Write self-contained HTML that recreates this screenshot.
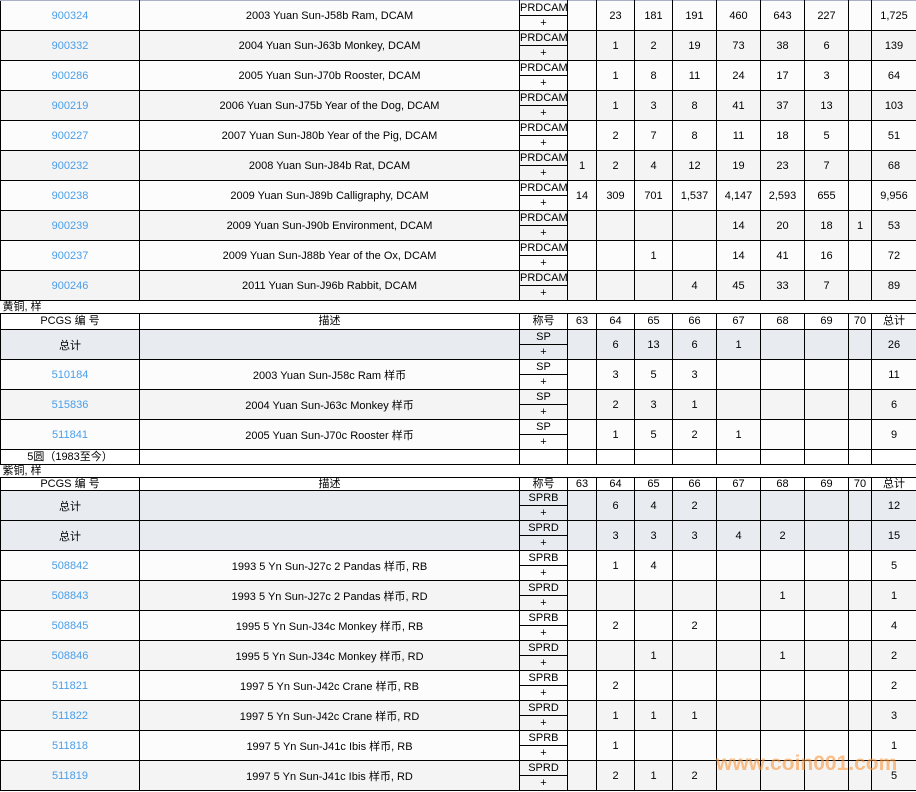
<!DOCTYPE html>
<html><head><meta charset="utf-8"><style>
body{margin:0;background:#fff;width:916px;height:792px;overflow:hidden;position:relative;font-family:"Liberation Sans","Noto Sans CJK SC",sans-serif;font-size:11px;color:#000}
table{border-collapse:collapse;table-layout:fixed;width:916px;position:absolute;left:0;top:0}
td{border:1px solid #000;padding:0;text-align:center;vertical-align:middle;height:29px;overflow:hidden;white-space:nowrap}
tr.a td{background:#fcfcfc}tr.b td{background:#f4f4f4}tr.t td{background:#e8ecf0}
td.c{color:#4a9ee8}
td.g div{height:14px;line-height:14px}
td.g div:first-child{border-bottom:1px solid #000}
tr.l td{height:12px;line-height:12px;text-align:left;border-left:none;border-right:none;background:#fff;padding-left:2px}
tr.h td{height:15px;line-height:15px;background:#fff}
tr.h2 td{height:12px;line-height:12px;background:#fff}
tr.f td{height:14px;line-height:14px;background:#fff}
tr.top td{border-top:1px solid #a8b0c8}
.wm{position:absolute;left:716px;top:752px;font-weight:bold;font-size:21px;color:rgba(250,150,60,.6)}
</style></head><body>
<table>
<colgroup><col style="width:139px"><col style="width:380px"><col style="width:48px"><col style="width:29px"><col style="width:38px"><col style="width:38px"><col style="width:44px"><col style="width:44px"><col style="width:44px"><col style="width:44px"><col style="width:23px"><col style="width:45px"></colgroup>
<tr class="a top"><td class="c">900324</td><td>2003 Yuan Sun-J58b Ram, DCAM</td><td class="g"><div>PRDCAM</div><div>+</div></td><td></td><td>23</td><td>181</td><td>191</td><td>460</td><td>643</td><td>227</td><td></td><td>1,725</td></tr>
<tr class="b"><td class="c">900332</td><td>2004 Yuan Sun-J63b Monkey, DCAM</td><td class="g"><div>PRDCAM</div><div>+</div></td><td></td><td>1</td><td>2</td><td>19</td><td>73</td><td>38</td><td>6</td><td></td><td>139</td></tr>
<tr class="a"><td class="c">900286</td><td>2005 Yuan Sun-J70b Rooster, DCAM</td><td class="g"><div>PRDCAM</div><div>+</div></td><td></td><td>1</td><td>8</td><td>11</td><td>24</td><td>17</td><td>3</td><td></td><td>64</td></tr>
<tr class="b"><td class="c">900219</td><td>2006 Yuan Sun-J75b Year of the Dog, DCAM</td><td class="g"><div>PRDCAM</div><div>+</div></td><td></td><td>1</td><td>3</td><td>8</td><td>41</td><td>37</td><td>13</td><td></td><td>103</td></tr>
<tr class="a"><td class="c">900227</td><td>2007 Yuan Sun-J80b Year of the Pig, DCAM</td><td class="g"><div>PRDCAM</div><div>+</div></td><td></td><td>2</td><td>7</td><td>8</td><td>11</td><td>18</td><td>5</td><td></td><td>51</td></tr>
<tr class="b"><td class="c">900232</td><td>2008 Yuan Sun-J84b Rat, DCAM</td><td class="g"><div>PRDCAM</div><div>+</div></td><td>1</td><td>2</td><td>4</td><td>12</td><td>19</td><td>23</td><td>7</td><td></td><td>68</td></tr>
<tr class="a"><td class="c">900238</td><td>2009 Yuan Sun-J89b Calligraphy, DCAM</td><td class="g"><div>PRDCAM</div><div>+</div></td><td>14</td><td>309</td><td>701</td><td>1,537</td><td>4,147</td><td>2,593</td><td>655</td><td></td><td>9,956</td></tr>
<tr class="b"><td class="c">900239</td><td>2009 Yuan Sun-J90b Environment, DCAM</td><td class="g"><div>PRDCAM</div><div>+</div></td><td></td><td></td><td></td><td></td><td>14</td><td>20</td><td>18</td><td>1</td><td>53</td></tr>
<tr class="a"><td class="c">900237</td><td>2009 Yuan Sun-J88b Year of the Ox, DCAM</td><td class="g"><div>PRDCAM</div><div>+</div></td><td></td><td></td><td>1</td><td></td><td>14</td><td>41</td><td>16</td><td></td><td>72</td></tr>
<tr class="b"><td class="c">900246</td><td>2011 Yuan Sun-J96b Rabbit, DCAM</td><td class="g"><div>PRDCAM</div><div>+</div></td><td></td><td></td><td></td><td>4</td><td>45</td><td>33</td><td>7</td><td></td><td>89</td></tr>
<tr class="l"><td colspan="12">黄铜, 样</td></tr>
<tr class="h"><td>PCGS 编 号</td><td>描述</td><td>称号</td><td>63</td><td>64</td><td>65</td><td>66</td><td>67</td><td>68</td><td>69</td><td>70</td><td>总计</td></tr>
<tr class="t"><td>总计</td><td></td><td class="g"><div>SP</div><div>+</div></td><td></td><td>6</td><td>13</td><td>6</td><td>1</td><td></td><td></td><td></td><td>26</td></tr>
<tr class="a"><td class="c">510184</td><td>2003 Yuan Sun-J58c Ram 样币</td><td class="g"><div>SP</div><div>+</div></td><td></td><td>3</td><td>5</td><td>3</td><td></td><td></td><td></td><td></td><td>11</td></tr>
<tr class="b"><td class="c">515836</td><td>2004 Yuan Sun-J63c Monkey 样币</td><td class="g"><div>SP</div><div>+</div></td><td></td><td>2</td><td>3</td><td>1</td><td></td><td></td><td></td><td></td><td>6</td></tr>
<tr class="a"><td class="c">511841</td><td>2005 Yuan Sun-J70c Rooster 样币</td><td class="g"><div>SP</div><div>+</div></td><td></td><td>1</td><td>5</td><td>2</td><td>1</td><td></td><td></td><td></td><td>9</td></tr>
<tr class="f"><td>5圆（1983至今）</td><td></td><td></td><td></td><td></td><td></td><td></td><td></td><td></td><td></td><td></td><td></td></tr>
<tr class="l"><td colspan="12">紫铜, 样</td></tr>
<tr class="h2"><td>PCGS 编 号</td><td>描述</td><td>称号</td><td>63</td><td>64</td><td>65</td><td>66</td><td>67</td><td>68</td><td>69</td><td>70</td><td>总计</td></tr>
<tr class="t"><td>总计</td><td></td><td class="g"><div>SPRB</div><div>+</div></td><td></td><td>6</td><td>4</td><td>2</td><td></td><td></td><td></td><td></td><td>12</td></tr>
<tr class="t"><td>总计</td><td></td><td class="g"><div>SPRD</div><div>+</div></td><td></td><td>3</td><td>3</td><td>3</td><td>4</td><td>2</td><td></td><td></td><td>15</td></tr>
<tr class="a"><td class="c">508842</td><td>1993 5 Yn Sun-J27c 2 Pandas 样币, RB</td><td class="g"><div>SPRB</div><div>+</div></td><td></td><td>1</td><td>4</td><td></td><td></td><td></td><td></td><td></td><td>5</td></tr>
<tr class="b"><td class="c">508843</td><td>1993 5 Yn Sun-J27c 2 Pandas 样币, RD</td><td class="g"><div>SPRD</div><div>+</div></td><td></td><td></td><td></td><td></td><td></td><td>1</td><td></td><td></td><td>1</td></tr>
<tr class="a"><td class="c">508845</td><td>1995 5 Yn Sun-J34c Monkey 样币, RB</td><td class="g"><div>SPRB</div><div>+</div></td><td></td><td>2</td><td></td><td>2</td><td></td><td></td><td></td><td></td><td>4</td></tr>
<tr class="b"><td class="c">508846</td><td>1995 5 Yn Sun-J34c Monkey 样币, RD</td><td class="g"><div>SPRD</div><div>+</div></td><td></td><td></td><td>1</td><td></td><td></td><td>1</td><td></td><td></td><td>2</td></tr>
<tr class="a"><td class="c">511821</td><td>1997 5 Yn Sun-J42c Crane 样币, RB</td><td class="g"><div>SPRB</div><div>+</div></td><td></td><td>2</td><td></td><td></td><td></td><td></td><td></td><td></td><td>2</td></tr>
<tr class="b"><td class="c">511822</td><td>1997 5 Yn Sun-J42c Crane 样币, RD</td><td class="g"><div>SPRD</div><div>+</div></td><td></td><td>1</td><td>1</td><td>1</td><td></td><td></td><td></td><td></td><td>3</td></tr>
<tr class="a"><td class="c">511818</td><td>1997 5 Yn Sun-J41c Ibis 样币, RB</td><td class="g"><div>SPRB</div><div>+</div></td><td></td><td>1</td><td></td><td></td><td></td><td></td><td></td><td></td><td>1</td></tr>
<tr class="b"><td class="c">511819</td><td>1997 5 Yn Sun-J41c Ibis 样币, RD</td><td class="g"><div>SPRD</div><div>+</div></td><td></td><td>2</td><td>1</td><td>2</td><td></td><td></td><td></td><td></td><td>5</td></tr>
</table>
<div class="wm">www.coin001.com</div>
</body></html>
